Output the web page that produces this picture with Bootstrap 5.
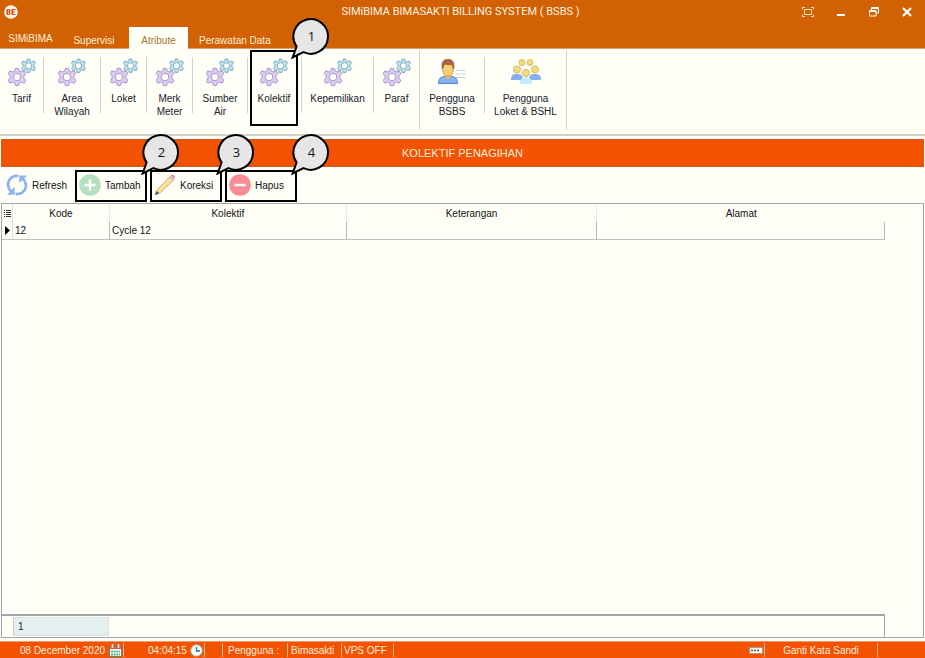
<!DOCTYPE html>
<html lang="id">
<head>
<meta charset="utf-8">
<meta name="viewport" content="width=device-width, initial-scale=1">
<title>SIMiBIMA BIMASAKTI BILLING SYSTEM ( BSBS )</title>
<link href="https://cdn.jsdelivr.net/npm/bootstrap@5.3.0/dist/css/bootstrap.min.css" rel="stylesheet">
<style>
:root{--paper:#fffff8;--brand:#d16103;--hot:#f25202;--ink:#20202c;--rule:#a4a4b0}
body{font:10px/13px "Liberation Sans",Arial,sans-serif;color:var(--ink);background:var(--paper)}
button{font:inherit;color:inherit;background:none;border:0;padding:0}
svg{display:block;flex:none}
.titlebar{background:var(--brand);color:#fff3e2;height:24px;padding-right:12px}
.titlebar h1{font:11px/24px Roboto,"Open Sans",sans-serif;margin:0;padding-left:8px;text-align:center}
.side{width:110px}
.win-btns{gap:22px}
.tabs{background:var(--brand);height:25px;padding-top:3px;border-bottom:1px solid #dca170}
.tabs button{color:#fff0dc;height:22px;padding:4px 11px 0}
.tabs .brand-tab{width:59px;padding:0 0 0 2px}
.tabs .menu-tab{width:70px}
.tabs .on{background:var(--paper);color:#a7762c;width:59px;height:23px;margin-bottom:-1px;padding:3px 0 0}
.ribbon{height:87px;border-bottom:2px solid #ced4ca}
.tool{padding-top:9px;text-align:center;position:relative}
.tool svg.pic{margin:0 auto 5px}
.w43{width:43px}.w56{width:56px}.w45{width:45px}.w54{width:54px}.w64{width:64px}.w71{width:71px}.w81{width:81px}
.boxed{border:2px solid #000;position:relative}
.tool.boxed{width:48px;height:76px;margin:1px 3px 0 2px;padding-top:6px}
.sep{width:1px;height:56px;margin-top:8px;background:#ced4ca}
.sep.full{height:79px;margin-top:2px}
.callout{position:absolute;width:40px;height:42px;z-index:3;pointer-events:none}
.callout svg{position:absolute;left:0;top:0}
.callout b{position:absolute;left:2px;top:0;width:37px;text-align:center;font:13px/39px "Open Sans","Noto Sans",sans-serif;color:#111}
.tool .callout{left:39px;top:-35px}
.act .callout{right:-36px;top:-39px}
.banner{background:var(--hot);color:#fff1dd;font-size:11px;line-height:26px;margin:3px 1px 0;border:solid #c65a20;border-width:1px 0;text-align:center}
.actions{height:36px;padding:3px 0 1px 4px;gap:3px}
.act{width:72px;height:32px;gap:4px;padding-bottom:2px;white-space:nowrap;color:#111}
.act.plain{width:68px;padding-left:2px}
.act.boxed{padding-left:2px}
.gridbox{border:1px solid var(--rule);margin:0 1px 3px;min-height:0}
.data{width:calc(100% - 38px);table-layout:fixed;border-collapse:separate;border-spacing:0;color:#111}
.data th,.data td{font-weight:400;padding:0 2px;height:18px;border-right:1px solid #e6ebe6;white-space:nowrap}
.data th{text-align:center}
.data td{border-right-color:#b5bab5;border-bottom:1px solid #c0c4bf}
.data th:last-child{border-right:0}
.c-mark{width:11px}.c-kode{width:97px}.c-kol{width:26.8%}.c-ket{width:28.4%}
.data .mark-cell{padding:0;border-right-color:#ddd}
.mark-cell svg{margin:0 auto}
.total{width:calc(100% - 38px);height:23px;border:1px solid var(--rule);border-width:2px 1px 0 0}
.total output{width:96px;height:19px;margin:1px 0 0 11px;padding:2px 4px;background:#e4f0f0;border:1px solid #d9e4dc;border-left-color:#c9c9d8}
.status{height:17px;background:var(--hot);color:#fff0dc;border-top:1px solid #ee9a6c;white-space:nowrap}
.cell{border-right:1px solid #ffb68c;height:14px;display:flex;align-items:center}
.s-date{width:124px;padding-left:20px;gap:4px}
.s-time{width:81px;padding-left:24px;gap:3px}
.s-gap{width:18px}.s-user{width:65px;padding-left:5px}.s-name{width:54px;padding-left:3px}.s-vps{width:52px;padding-left:2px}
.s-key{width:16px}.s-pass{width:113px;justify-content:center}.s-end{width:47px}
</style>
<script src="https://cdn.jsdelivr.net/npm/bootstrap@5.3.0/dist/js/bootstrap.bundle.min.js"></script>
</head>
<body>
<svg width="0" height="0" class="position-absolute" aria-hidden="true">
<defs>
<path id="cog" d="M-1.6-8.6h3.2l.6 2.6 2 1 3-1.200 1.800 2.900-2.100 2v2.600l2.100 2-1.800 2.900-3-1.200-2 1-.6 2.600h-3.200l-.6-2.600-2-1-3 1.200-1.800-2.900 2.100-2v-2.600l-2.100-2 1.800-2.900 3 1.200 2-1z"/>
<symbol id="gears" viewBox="0 0 28 29">
<g transform="translate(9 19)"><use href="#cog" fill="#dccdf0" stroke="#a796cc"/><circle r="3.800" fill="#fffff8" stroke="#a796cc"/></g>
<g transform="translate(20.500 7.800) scale(.78)"><use href="#cog" fill="#c3e3ee" stroke="#73a9bd" stroke-width="1.200"/><circle r="4" fill="#fffff8" stroke="#73a9bd" stroke-width="1.200"/></g>
</symbol>
<symbol id="bubble" viewBox="0 0 40 42"><path d="M5.600 29.500A17.300 17.300 0 1 1 12.500 35.200L1.600 40.500Z" fill="#e6e6e6" stroke="#000" stroke-width="2"/></symbol>
</defs>
</svg>
<div class="vh-100 d-flex flex-column overflow-hidden">
<header>
<div class="titlebar d-flex align-items-center">
<div class="side ps-1">
<svg width="14" height="14" viewBox="0 0 14 14"><circle cx="7" cy="7" r="6.800" fill="#fff6ec"/><path d="M2.500 4h3l1 1-.6 2 .8 1.500L5.500 10h-3zM4 5v1.300h1V5zm0 2.500V9h1.200V7.500zM7.500 4h4v1.300H9V6.500h2v1H9V9h2.500v1h-4z" fill="#dc480c"/></svg>
</div>
<h1 class="flex-grow-1">SIMiBIMA BIMASAKTI BILLING SYSTEM ( BSBS )</h1>
<div class="side win-btns d-flex justify-content-end align-items-center">
<button aria-label="Layar penuh"><svg width="12" height="10" viewBox="0 0 12 10" fill="none" stroke="#ffe2bd"><path d="M.5 2.500v-2H3M9 .5h2.500v2M11.500 7.500v2H9M3 9.500H.5v-2"/><path d="M2.500 2.500h7v5h-7z"/></svg></button>
<button aria-label="Kecilkan"><svg width="11" height="10" viewBox="0 0 11 10"><path d="M1 7h8v2H1z" fill="#fff"/></svg></button>
<button aria-label="Pulihkan"><svg width="10" height="10" viewBox="0 0 10 10" fill="none" stroke="#fff"><path d="M2.500 3V.5h7v5.500H7M2 1.500h7.500M.5 3.500h6.500v5.500H.5zM.5 4.500H7"/></svg></button>
<button aria-label="Tutup"><svg width="12" height="10" viewBox="0 0 12 10"><path d="M2 1l8 8M10 1L2 9" stroke="#fff" stroke-width="2.200"/></svg></button>
</div>
</div>
<nav class="tabs d-flex" aria-label="Menu">
<button class="brand-tab">SIMiBIMA</button>
<button class="menu-tab">Supervisi</button>
<button class="on">Atribute</button>
<button>Perawatan Data</button>
</nav>
</header>
<section class="ribbon d-flex align-items-start" aria-label="Atribute">
<button class="tool w43"><svg class="pic" width="28" height="29"><use href="#gears"/></svg>Tarif</button><span class="sep"></span>
<button class="tool w56"><svg class="pic" width="28" height="29"><use href="#gears"/></svg>Area<br>Wilayah</button><span class="sep"></span>
<button class="tool w45"><svg class="pic" width="28" height="29"><use href="#gears"/></svg>Loket</button><span class="sep"></span>
<button class="tool w45"><svg class="pic" width="28" height="29"><use href="#gears"/></svg>Merk<br>Meter</button><span class="sep"></span>
<button class="tool w54"><svg class="pic" width="28" height="29"><use href="#gears"/></svg>Sumber<br>Air</button><span class="sep"></span>
<button class="tool boxed d-flex flex-column align-items-center"><svg class="pic" width="28" height="29"><use href="#gears"/></svg>Kolektif<span class="callout"><svg width="40" height="42"><use href="#bubble"/></svg><b>1</b></span></button><span class="sep"></span>
<button class="tool w71"><svg class="pic" width="28" height="29"><use href="#gears"/></svg>Kepemilikan</button><span class="sep"></span>
<button class="tool w45"><svg class="pic" width="28" height="29"><use href="#gears"/></svg>Paraf</button><span class="sep full"></span>
<button class="tool w64"><svg class="pic" width="28" height="29" viewBox="0 0 28 29"><path d="M18 12.500h9.500M18 16h9.500M18 19.500h9.500" stroke="#b9d9d4"/><path d="M.5 25.500c0-5 2-6.500 7-7.500h5c5 1 7 2.500 7 7.500z" fill="#86b3f2" stroke="#557fc4"/><path d="M7 16h6v3q-3 3.500-6 0z" fill="#eeb04d"/><ellipse cx="10" cy="11.500" rx="5.300" ry="7" fill="#fbcf74" stroke="#b67c35" stroke-width=".7"/><path d="M4.300 11C3 4 5.500 1.500 9.500 1.300c5-.3 7.500 3 6.200 9.700l-1.500-4.500c-3 .5-6 .3-7.500-.8z" fill="#a9673f" stroke="#875030" stroke-width=".6"/></svg>Pengguna<br>BSBS</button><span class="sep"></span>
<button class="tool w81"><svg class="pic" width="30" height="29" viewBox="0 0 30 29"><g fill="#86aff0"><path d="M0 22c0-5 2-6 6-6s6 1 6 6zM18 22c0-5 2-6 6-6s6 1 6 6z"/></g><g fill="#f3da7c" stroke="#cbae55" stroke-width=".7"><circle cx="11" cy="4.500" r="3"/><circle cx="19" cy="4.500" r="3"/><circle cx="6" cy="11.500" r="3.600"/><circle cx="24" cy="11.500" r="3.600"/></g><path d="M9 26c0-5 2-6.500 6-6.500s6 1.500 6 6.500z" fill="#c2eafb"/><circle cx="15" cy="15" r="3.700" fill="#f3da7c" stroke="#cbae55" stroke-width=".7"/></svg>Pengguna<br>Loket &amp; BSHL</button><span class="sep full"></span>
</section>
<main class="flex-grow-1 d-flex flex-column">
<h2 class="banner mb-0">KOLEKTIF PENAGIHAN</h2>
<div class="actions d-flex">
<button class="act plain d-flex align-items-center"><svg width="22" height="22" viewBox="0 0 24 24" fill="none" stroke="#8bb5ef" stroke-width="3"><path d="M13.500 2.200C3 1.500-1 12 5.500 19"/><path d="M10.500 21.800C21 22.500 25 12 18.500 5"/><path d="M1 22.500h8.500V14zM23 1.500h-8.500V10z" fill="#8bb5ef" stroke="none"/></svg>Refresh</button>
<button class="act boxed d-flex align-items-center"><svg width="22" height="22" viewBox="0 0 22 22"><circle cx="11" cy="11" r="10.800" fill="#b4e0c1"/><path d="M11 5.500v11M5.500 11h11" stroke="#fff" stroke-width="2.500"/></svg>Tambah<span class="callout"><svg width="40" height="42"><use href="#bubble"/></svg><b>2</b></span></button>
<button class="act boxed d-flex align-items-center"><svg width="22" height="22" viewBox="0 0 22 22"><path d="M1.500 20.500l2-5L16.500 2l3.500 3.500L6.500 18.500z" fill="#f9df8e" stroke="#bd9b58" stroke-width=".8"/><path d="M5 16L17.500 3.500" stroke="#fff2b8"/><path d="M14.800 3.200L16.500 1.500l4 4-1.700 1.700z" fill="#b6cbd0"/><path d="M16.500 1.500q1.500-1.500 3-.5 2.500 1.500 1.500 4z" fill="#ee8d96"/><path d="M1 21l1.500-4 2.500 2.500z" fill="#444"/></svg>Koreksi<span class="callout"><svg width="40" height="42"><use href="#bubble"/></svg><b>3</b></span></button>
<button class="act boxed d-flex align-items-center"><svg width="22" height="22" viewBox="0 0 22 22"><circle cx="11" cy="11" r="10.800" fill="#fa8d95"/><path d="M5.500 11h11" stroke="#fff" stroke-width="2.500"/></svg>Hapus<span class="callout"><svg width="40" height="42"><use href="#bubble"/></svg><b>4</b></span></button>
</div>
<div class="gridbox flex-grow-1 d-flex flex-column justify-content-between">
<table class="data">
<colgroup><col class="c-mark"><col class="c-kode"><col class="c-kol"><col class="c-ket"><col></colgroup>
<thead><tr><th class="mark-cell" aria-label="Penanda"><svg width="7" height="9" viewBox="0 0 7 9"><path d="M0 1.500h1M2 1.500h5M0 3.500h1M2 3.500h5M0 5.500h1M2 5.500h5M0 7.500h1M2 7.500h5" stroke="#333"/></svg></th><th>Kode</th><th>Kolektif</th><th>Keterangan</th><th>Alamat</th></tr></thead>
<tbody><tr><td class="mark-cell"><svg width="5" height="9" viewBox="0 0 5 9"><path d="M0 0l5 4.500L0 9z"/></svg></td><td>12</td><td>Cycle 12</td><td></td><td></td></tr></tbody>
</table>
<div class="total"><output class="d-block">1</output></div>
</div>
</main>
<footer class="status d-flex align-items-center">
<div class="cell s-date">08 December 2020<svg width="13" height="14" viewBox="0 0 13 14"><path d="M.5 3h12v10.500H.5z" fill="#f6fff5" stroke="#71806f"/><path d="M1 3h11v3H1z" fill="#df5446"/><path d="M3.500 1v4M9.500 1v4" stroke="#eee" stroke-width="1.500"/><path d="M2 8.500h9M2 11.500h9" stroke="#61b28c" stroke-width="2" stroke-dasharray="2 .6"/></svg></div>
<div class="cell s-time">04:04:15<svg width="13" height="13" viewBox="0 0 13 13"><circle cx="6.500" cy="6.500" r="5.700" fill="#f4ffff" stroke="#a6b9b5"/><path d="M6.500 3v4H10" fill="none" stroke="#486873" stroke-width="1.300"/></svg></div>
<div class="cell s-gap"></div>
<div class="cell s-user">Pengguna :</div>
<div class="cell s-name">Bimasakti</div>
<div class="cell s-vps">VPS OFF</div>
<div class="cell s-key ms-auto"><svg width="14" height="7" viewBox="0 0 14 7"><path d="M.5.5h13v6H.5z" fill="#fffceb" stroke="#a79b83"/><path d="M2 3.500h8" stroke="#555" stroke-width="1.500" stroke-dasharray="2 1"/></svg></div>
<button class="cell s-pass">Ganti Kata Sandi</button>
<div class="s-end"></div>
</footer>
</div>
</body>
</html>
